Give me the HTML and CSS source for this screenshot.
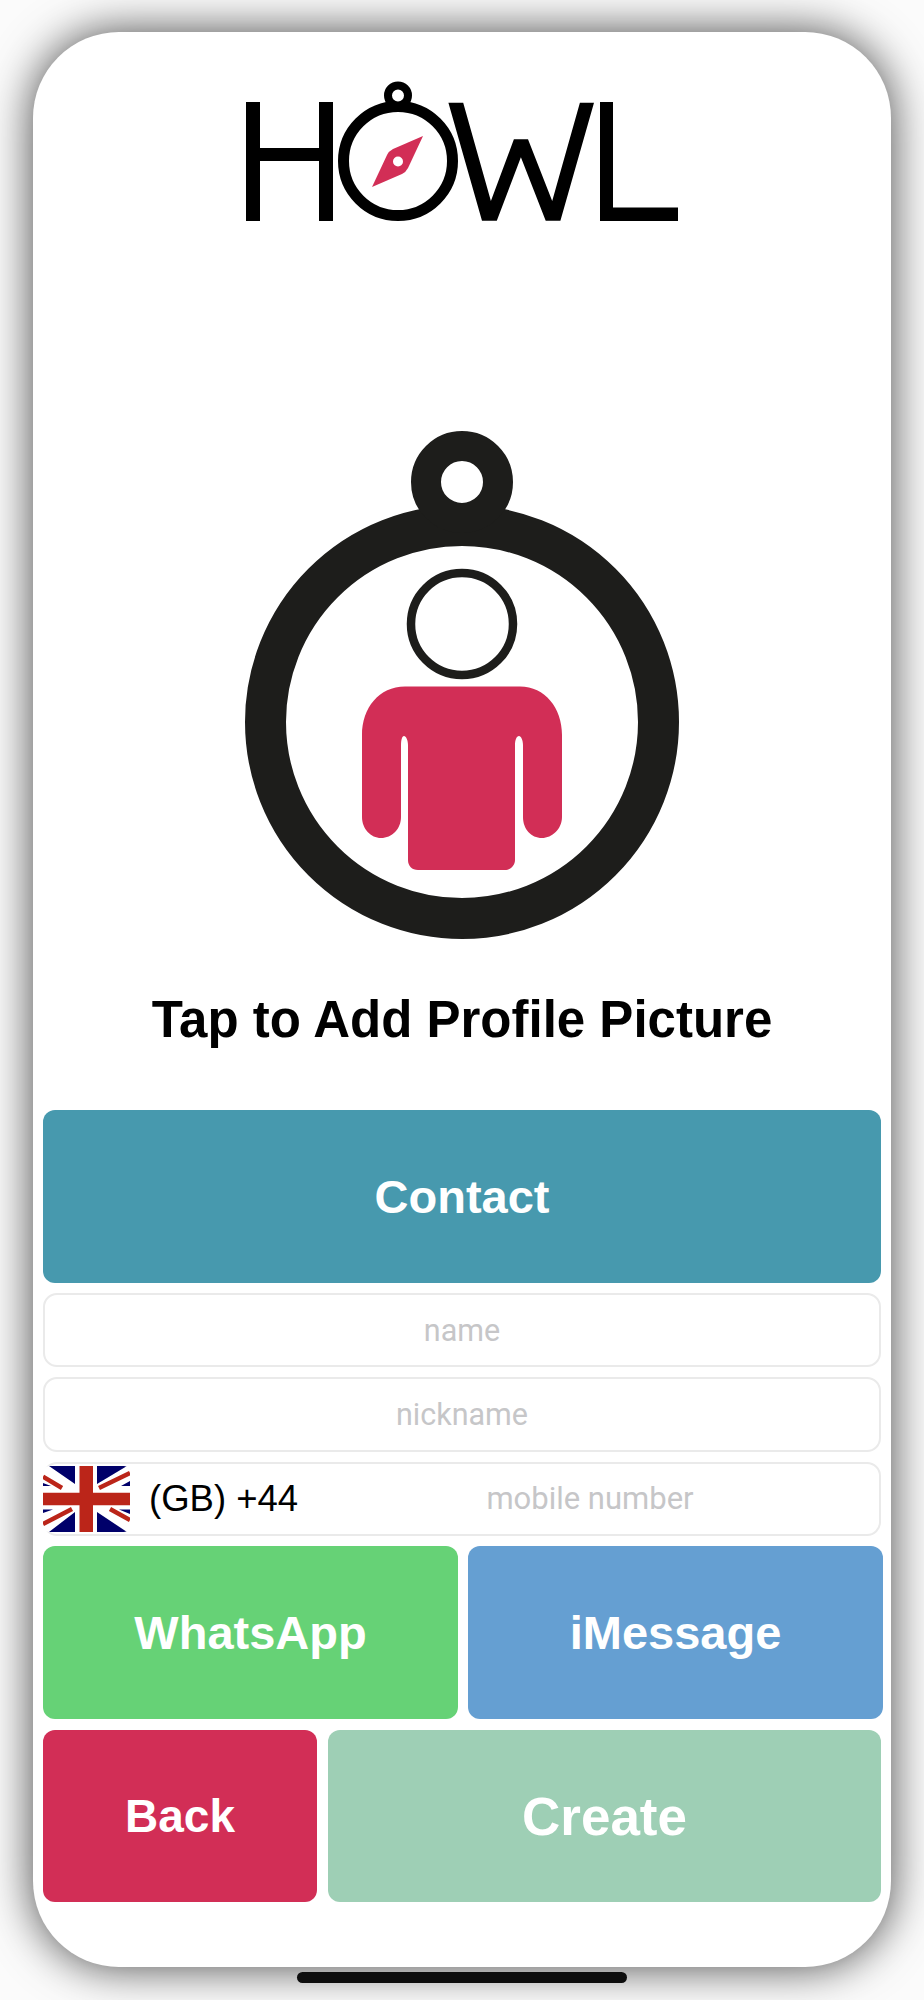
FILE: index.html
```html
<!DOCTYPE html>
<html lang="en">
<head>
    <meta charset="UTF-8">
    <meta name="viewport" content="width=device-width, initial-scale=1.0">
    <title>Howl - Create Profile</title>
    <link rel="stylesheet" href="styles.css">
</head>
<body>
    <div class="phone">
        <svg class="logo" viewBox="246 81 432 140" aria-label="Howl">
            <path d="M246 102H260V148H319V102H333V221H319V161H260V221H246Z"/>
            <circle class="logo-ring" cx="398" cy="161" r="54.5"/>
            <circle class="logo-ring-small" cx="398" cy="95.5" r="10"/>
            <path class="accent" d="M423 136L393 149Q389 151 387 155L372 187L402 174Q406 172 408 168Z"/>
            <circle class="logo-hole" cx="398" cy="161.5" r="5"/>
            <path d="M448.4 102.7H463.2L490.9 201L513.9 139.3H528L552.2 201L579.9 102.7H594L560.4 220.7H545.7L520.9 157.3L496.8 220.7H482Z"/>
            <path d="M600 102H613V207.5H678V221H600Z"/>
        </svg>

        <svg class="avatar" viewBox="245 431 434 508" aria-label="Add profile picture">
            <circle class="avatar-ring" cx="462" cy="722" r="196.5"/>
            <circle class="avatar-loop" cx="462" cy="482" r="36"/>
            <circle class="avatar-head" cx="462" cy="624" r="51"/>
            <path class="accent" d="M405 686.5H520C545 686.5 562 708 562 735V817C562 829 552 838 542 838C531 838 523 829 523 817V745C523 740 521 736 519 736C516.5 736 515 740 515 745V860C515 866 510 870 505 870H418C412 870 408 866 408 860V745C408 740 406 736 404 736C402 736 401 740 401 745V817C401 829 392 838 381 838C371 838 362 829 362 817V735C362 708 379 686.5 405 686.5Z"/>
        </svg>

        <h1 class="title">Tap to Add Profile Picture</h1>

        <div class="form">
            <div class="btn btn-contact">Contact</div>
            <div class="field"><span class="placeholder">name</span></div>
            <div class="field"><span class="placeholder">nickname</span></div>
            <div class="field field-phone">
                <svg class="flag" viewBox="0 0 87 66">
                    <rect width="87" height="66" fill="#fff"/>
                    <path fill="#00006a" d="M6 0H32V18ZM0 17V20H8ZM54 0H84L54 18ZM87 15V20H78ZM32 46V66H6ZM0 43.5V47L10 43.5ZM54 46V66H84ZM87 43.5V48L76 43.5Z"/>
                    <path stroke="#bb2519" stroke-width="4.5" d="M0 10.7L19 22M56 22L87 7M0 58L29 43M67 43L87 54"/>
                    <path fill="#bb2519" d="M36.5 0H50V26.7H87V39.3H50V66H36.5V39.3H0V26.7H36.5Z"/>
                </svg>
                <span class="dial-code">(GB) +44</span>
                <span class="placeholder placeholder-phone">mobile number</span>
            </div>
            <div class="row row-share">
                <div class="btn btn-whatsapp">WhatsApp</div>
                <div class="btn btn-imessage">iMessage</div>
            </div>
            <div class="row row-actions">
                <div class="btn btn-back">Back</div>
                <div class="btn btn-create">Create</div>
            </div>
        </div>
    </div>
    <div class="home-bar"></div>
</body>
</html>
```

FILE: styles.css
```css
* {
    box-sizing: border-box;
}

body {
    margin: 0;
    height: 2000px;
    overflow: hidden;
    background: #fbfbfb;
    font-family: "Liberation Sans", Arial, sans-serif;
}

.phone {
    width: 858px;
    height: 1935px;
    margin: 32px 0 0 33px;
    padding: 49px 10px 0;
    background: white;
    border-radius: 86px;
    box-shadow: 0 0 46px rgba(0,0,0,0.72);
    display: flex;
    flex-direction: column;
    align-items: center;
}

.logo {
    width: 432px;
    height: 140px;
    flex-shrink: 0;
}

.logo-ring {
    fill: none;
    stroke: black;
    stroke-width: 11px;
}

.logo-ring-small {
    fill: white;
    stroke: black;
    stroke-width: 8px;
}

.logo-hole {
    fill: white;
}

.accent {
    fill: #d22e56;
}

.avatar {
    width: 434px;
    height: 508px;
    margin-top: 210px;
    flex-shrink: 0;
}

.avatar-ring {
    fill: white;
    stroke: #1d1d1b;
    stroke-width: 41px;
}

.avatar-loop {
    fill: white;
    stroke: #1d1d1b;
    stroke-width: 30px;
}

.avatar-head {
    fill: white;
    stroke: #1d1d1b;
    stroke-width: 8.5px;
}

.title {
    margin: 51px 0 60px;
    font-size: 51px;
    line-height: 60px;
    font-weight: bold;
    color: black;
}

.form {
    width: 100%;
    display: flex;
    flex-direction: column;
    gap: 10px;
}

.btn {
    display: flex;
    align-items: center;
    justify-content: center;
    height: 173px;
    border-radius: 12px;
    color: white;
    font-size: 47px;
    font-weight: bold;
}

.btn-contact {
    background: #4799ae;
}

.field {
    height: 74.3px;
    border: 2px solid #eaeaea;
    border-radius: 14px;
    display: flex;
    align-items: center;
    justify-content: center;
}

.placeholder {
    font-family: Roboto, "Liberation Sans", sans-serif;
    font-size: 30.5px;
    color: #c6c6c8;
}

.field-phone {
    justify-content: flex-start;
}

.flag {
    width: 87px;
    height: 66px;
    margin-left: -2px;
    border-radius: 6px;
    flex-shrink: 0;
}

.dial-code {
    margin-left: 19px;
    width: 277px;
    font-size: 36.5px;
    color: black;
}

.placeholder-phone {
    width: 328px;
    font-size: 31px;
    text-align: center;
}

.row {
    display: flex;
    gap: 10px;
}

.row-share {
    margin-bottom: 1px;
}

.row-actions {
    gap: 11px;
}

.row-actions .btn {
    height: 172.5px;
}

.btn-whatsapp {
    flex: none;
    width: 415px;
    background: #66d276;
}

.btn-imessage {
    flex: none;
    width: 415px;
    background: #659fd2;
}

.btn-back {
    flex: none;
    width: 274px;
    font-size: 46px;
    background: #d22e56;
}

.btn-create {
    flex: 1;
    font-size: 53px;
    background: #9ecfb5;
}

.home-bar {
    width: 330px;
    height: 11px;
    margin: 5px 0 0 297px;
    background: #0e0e0e;
    border-radius: 6px;
}
```
